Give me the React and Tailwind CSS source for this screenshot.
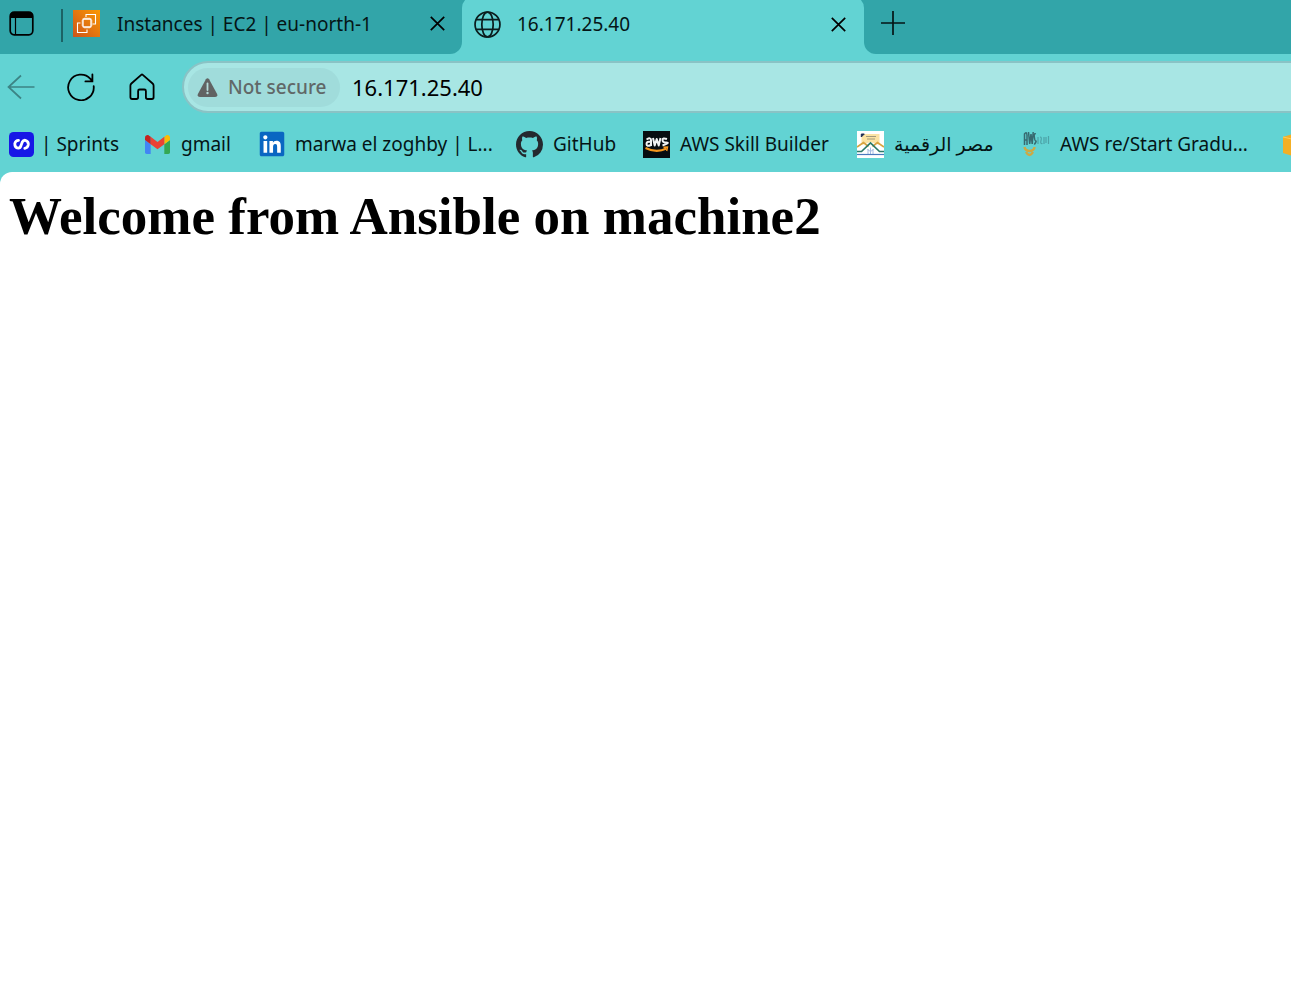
import React from "react";
import { FaLinkedin } from "react-icons/fa";

function TabActionsIcon() {
  return (
    <svg width="25" height="25" viewBox="0 0 25 25" fill="none">
      <rect x="1.2" y="1.2" width="22.6" height="22.6" rx="4" stroke="#000" strokeWidth="1.7" />
      <path d="M1 7V5a4 4 0 0 1 4-4h15a4 4 0 0 1 4 4v2z" fill="#000" />
      <path d="M6.5 7v16.500" stroke="#000" strokeWidth="1.2" />
    </svg>
  );
}

function Ec2Icon() {
  return (
    <svg className="shrink-0" width="27" height="27" viewBox="0 0 27 27" fill="none">
      <defs>
        <linearGradient id="ec2" x1="0" y1="1" x2="1" y2="0">
          <stop offset="0" stopColor="#cc551a" />
          <stop offset="1" stopColor="#fb9803" />
        </linearGradient>
      </defs>
      <rect width="27" height="27" fill="url(#ec2)" />
      <g stroke="#fff" strokeWidth="1.1">
        <path d="M13 7V4.500h9.500v9.500H19.500M7.500 13H4.500v9.500h9.500V19.500" />
        <rect x="10" y="9" width="8" height="8" rx="0.5" strokeWidth="1.3" />
        <path strokeWidth="0.8" d="M12 7.500v1.500M14 7.500v1.500M16 7.500v1.500M12 17v1.500M14 17v1.500M16 17v1.500M8.500 11h1.500M8.500 13h1.500M8.500 15h1.500M18 11h1.500M18 13h1.500M18 15h1.500" />
      </g>
    </svg>
  );
}

function CloseIcon() {
  return (
    <svg width="15" height="15" viewBox="0 0 15 15" stroke="#000" strokeWidth="1.7">
      <path d="M.8.8l13.400 13.400M14.200.8L.8 14.200" />
    </svg>
  );
}

function GlobeIcon() {
  return (
    <svg className="shrink-0" width="27" height="27" viewBox="0 0 28 28" fill="none" stroke="#0b1d1e" strokeWidth="1.8">
      <circle cx="14" cy="14" r="12.900" />
      <ellipse cx="14" cy="14" rx="5.900" ry="12.900" />
      <path d="M2.300 9h23.400M2.300 19h23.400" />
    </svg>
  );
}

function PlusIcon() {
  return (
    <svg width="24" height="24" viewBox="0 0 24 24" stroke="#051516" strokeWidth="1.7">
      <path d="M12 0v24M0 12h24" />
    </svg>
  );
}

function BackIcon() {
  return (
    <svg width="28" height="26" viewBox="0 0 28 26" fill="none" stroke="#3c8485" strokeWidth="1.7">
      <path d="M14 1.500L1.500 13 14 24.500M1.500 13H27.500" />
    </svg>
  );
}

function ReloadIcon() {
  return (
    <svg width="28" height="28" viewBox="0 0 28 28" fill="none" stroke="#000" strokeWidth="1.8" strokeLinecap="round">
      <path d="M26.700 13.200A12.800 12.800 0 1 1 23.400 5.800L25.200 8.300M25.400 1.400v7h-7" />
    </svg>
  );
}

function HomeIcon() {
  return (
    <svg width="26" height="28" viewBox="0 0 26 28" fill="none" stroke="#000" strokeWidth="1.8" strokeLinejoin="round">
      <path d="M12.200 1.900q.8-.7 1.600 0L23.600 10.500q1 .9 1 2.200V24.300q0 1.700-1.700 1.700h-4.300q-1.700 0-1.700-1.700V18q0-1.500-1.500-1.500h-4.800q-1.500 0-1.500 1.500v6.300q0 1.700-1.700 1.700H3.100q-1.700 0-1.700-1.700V12.700q0-1.300 1-2.200z" />
    </svg>
  );
}

function WarningIcon() {
  return (
    <svg className="shrink-0" width="21" height="19" viewBox="0 0 21 19">
      <path d="M8.900 1.200q1.600-1.900 3.200 0l8 14.800q.9 2.700-1.900 3H2.800Q0 18.700.9 16z" fill="#616363" />
      <path d="M10.500 5.500v6.500" stroke="#b5dcda" strokeWidth="1.8" strokeLinecap="round" />
      <circle cx="10.500" cy="15" r="1.200" fill="#b5dcda" />
    </svg>
  );
}

function SprintsIcon() {
  return (
    <svg width="25" height="25" viewBox="0 0 25 25" fill="none">
      <rect width="25" height="25" rx="4.500" fill="#1717e6" />
      <g stroke="#fff" strokeWidth="2.8" strokeLinecap="round" strokeLinejoin="round">
        <path d="M9.500 8.300Q6.500 8.500 5.800 11.500Q5.600 15.500 9.300 16.200Q11.300 16 12 13.500L13.300 10Q14.300 8 16.300 8.300Q19.800 9.500 19.300 12.800Q18.700 15.800 15.800 16.400" />
      </g>
    </svg>
  );
}

function GmailIcon() {
  return (
    <svg width="25" height="19" viewBox="52 42 88 66">
      <path fill="#4285f4" d="M58 108h14V74L52 59v43c0 3.320 2.690 6 6 6" />
      <path fill="#34a853" d="M120 108h14c3.320 0 6-2.690 6-6V59l-20 15" />
      <path fill="#fbbc04" d="M120 48v26l20-15v-8c0-7.420-8.470-11.650-14.400-7.200" />
      <path fill="#ea4335" d="M72 74V48l24 18 24-18v26L96 92" />
      <path fill="#c5221f" d="M52 51v8l20 15V48l-5.600-4.200c-5.940-4.450-14.400-.22-14.400 7.200" />
    </svg>
  );
}

function LinkedInIcon() {
  return (
    <span className="flex size-[25px] items-center justify-center bg-[linear-gradient(#fff,#fff)] bg-[length:19px_19px] bg-center bg-no-repeat">
      <FaLinkedin size={28} color="#0a66c2" className="shrink-0" />
    </span>
  );
}

function GitHubIcon() {
  return (
    <svg width="27" height="27" viewBox="0 0 16 16" fill="#24292f">
      <path d="M8 0C3.580 0 0 3.580 0 8c0 3.540 2.290 6.530 5.470 7.590.4.070.55-.17.55-.38 0-.19-.01-.82-.01-1.490-2.010.37-2.530-.49-2.690-.94-.09-.23-.48-.94-.82-1.130-.28-.15-.68-.52-.01-.53.63-.01 1.080.58 1.230.82.72 1.210 1.870.87 2.330.66.07-.52.28-.87.51-1.070-1.780-.2-3.640-.89-3.640-3.950 0-.87.31-1.590.82-2.150-.08-.2-.36-1.020.08-2.120 0 0 .67-.21 2.200.82.64-.18 1.320-.27 2-.27s1.360.09 2 .27c1.530-1.040 2.200-.82 2.200-.82.44 1.100.16 1.920.08 2.120.51.56.82 1.270.82 2.150 0 3.070-1.870 3.750-3.650 3.950.29.25.54.73.54 1.480 0 1.070-.01 1.930-.01 2.200 0 .21.15.46.55.38A8.010 8.010 0 0 0 16 8c0-4.420-3.580-8-8-8z" />
    </svg>
  );
}

function AwsIcon() {
  return (
    <svg width="27" height="27" viewBox="0 0 27 27" fill="none">
      <rect width="27" height="27" fill="#070d10" />
      <g stroke="#f1f3f3" strokeWidth="2" strokeLinejoin="round">
        <path d="M3.500 8.500Q8 6 8 9v6M8 11Q3.500 10 3.500 13t4.500 1" />
        <path d="M10 7l1.700 7.500L13.700 8l2 6.500L17.500 7" />
        <path d="M24 8q-4.500-1.500-4.500 1t4 2.500-4 3" />
      </g>
      <path d="M2.500 17q11 5.500 21 .5" stroke="#f7981d" strokeWidth="2" />
      <path d="M20.500 16.200l4-.2-.8 4" stroke="#f7981d" strokeWidth="1.4" />
    </svg>
  );
}

function DigitalEgyptIcon() {
  return (
    <svg width="27" height="27" viewBox="0 0 27 27" fill="none">
      <rect width="27" height="27" fill="#fff" />
      <path d="M4.500 3h18v11l-9-3-9 3z" fill="#fbe3a3" />
      <path d="M4.300 6V3h3z" fill="#1d2b55" stroke="#1d2b55" />
      <path d="M9 5.500h10M10 8h8" stroke="#a39a7b" />
      <path d="M0 16l6.500-4.500 5 4M15.500 15.500l5-4L27 16" stroke="#d9a440" strokeWidth="1.7" />
      <path d="M0 20.500h4.500l9-8.500 9 8.500H27" stroke="#2c7a68" strokeWidth="1.7" />
      <path d="M11 23v-5M13.500 23v-6.500M16 23v-5M10.500 18.500l3 2 3-2" stroke="#a6bce2" />
      <path d="M0 23.500h27" stroke="#4a79bd" strokeWidth="1.2" />
    </svg>
  );
}

function RestartIcon() {
  return (
    <svg width="27" height="27" viewBox="0 0 27 27" fill="none">
      <path d="M1.500 14V3q2-3 2.500 1v10M1.500 9h3M5.500 1l1.200 12L8 3l1.200 10L10.200 1M12.800 3q-2-1-1.500 3t1.500 4-1.500 3.500" stroke="#376a70" strokeWidth="1.5" />
      <path d="M15 6v7M17 6q2 0 1 3.500t1.500 3M21 6v7M23 6v6M25.500 5v8" stroke="#4ca3a8" strokeWidth="1.2" />
      <path d="M1.500 16q.5 3.500 5 4 5-.5 5-4M3 21q3.500 6 7 0" stroke="#cda944" strokeWidth="2.4" />
    </svg>
  );
}

function CubeIcon() {
  return (
    <svg width="27" height="27" viewBox="0 0 27 27">
      <path d="M0 6l13-4 14 4v15l-14 5-13-4z" fill="#f3af25" />
      <path d="M0 6l13 3L27 6" fill="none" stroke="#ffcb57" />
    </svg>
  );
}

const bookmarks = [
  { label: "| Sprints", Icon: SprintsIcon, width: "w-[136px]", gap: "gap-[6px]" },
  { label: "gmail", Icon: GmailIcon, width: "w-[114px]", gap: "gap-[10px]" },
  { label: "marwa el zoghby | L...", Icon: LinkedInIcon, width: "w-[258px]", gap: "gap-[10px]" },
  { label: "GitHub", Icon: GitHubIcon, width: "w-[127px]", gap: "gap-[10px]" },
  { label: "AWS Skill Builder", Icon: AwsIcon, width: "w-[214px]", gap: "gap-[10px]" },
  { label: "مصر الرقمية", Icon: DigitalEgyptIcon, width: "w-[166px]", gap: "gap-[10px]" },
  { label: "AWS re/Start Gradu...", Icon: RestartIcon, width: "w-[260px]", gap: "gap-[10px]" },
];

export default function App() {
  return (
    <div className="flex min-h-screen flex-col overflow-hidden bg-[#62d3d3] font-['Noto_Sans','DejaVu_Sans',sans-serif] text-[19px] leading-6 text-[#051516]">
      <header>
        <div className="flex h-[54px] overflow-hidden bg-[#62d3d3]">
          <div className="flex w-[462px] shrink-0 items-center rounded-br-xl bg-[#32a5a9] pr-[17px] pb-[7px] pl-[9px]">
            <button aria-label="Tab actions menu"><TabActionsIcon /></button>
            <div className="mt-1 ml-[27px] h-[33px] w-[2px] shrink-0 bg-[#1c6265]" />
            <div className="ml-[10px] flex flex-1 items-center">
              <Ec2Icon />
              <button className="ml-[17px] whitespace-nowrap">Instances | EC2 | eu-north-1</button>
              <button className="ml-auto" aria-label="Close Instances tab"><CloseIcon /></button>
            </div>
          </div>
          <div className="w-[402px] shrink-0 bg-[linear-gradient(#32a5a9_0_20px,#62d3d3_20px)]">
            <div className="-mt-1 flex h-[58px] items-center rounded-t-xl bg-[#62d3d3] pr-[18px] pb-[2px] pl-3">
              <GlobeIcon />
              <button className="ml-4">16.171.25.40</button>
              <button className="ml-auto" aria-label="Close current tab"><CloseIcon /></button>
            </div>
          </div>
          <div className="flex flex-1 items-center rounded-bl-xl bg-[#32a5a9] pb-2 pl-[17px]">
            <button aria-label="New tab"><PlusIcon /></button>
          </div>
        </div>

        <div className="flex h-[67px] items-center pb-px pl-[7px]">
          <button aria-label="Back"><BackIcon /></button>
          <button className="ml-8" aria-label="Refresh"><ReloadIcon /></button>
          <button className="ml-[34px]" aria-label="Home"><HomeIcon /></button>
          <div className="-mr-8 ml-[27px] flex h-[52px] flex-1 items-center rounded-full border-2 border-[#8ac3c5] bg-[#a8e6e4] pl-1">
            <button className="flex h-[39px] w-[152px] shrink-0 items-center gap-[10px] rounded-full bg-[#a0dcdb] pl-[9px] font-medium whitespace-nowrap text-[#616868]">
              <WarningIcon />
              Not secure
            </button>
            <input
              aria-label="Address"
              defaultValue="16.171.25.40"
              className="ml-3 min-w-0 flex-1 bg-transparent text-[22px] text-black outline-none"
            />
          </div>
        </div>

        <nav aria-label="Favorites" className="flex h-[51px] items-center overflow-hidden pb-[5px] pl-2">
          {bookmarks.map(({ label, Icon, width, gap }) => (
            <a key={label} href="#" className={`flex shrink-0 items-center whitespace-nowrap ${gap} ${width}`}>
              <span className="flex w-[27px] shrink-0 justify-center"><Icon /></span>
              {label}
            </a>
          ))}
          <a href="#" aria-label="More favorites" className="shrink-0"><CubeIcon /></a>
        </nav>
      </header>

      <main className="flex-1 rounded-tl-xl bg-white px-[9px] pt-[14px]">
        <h1 className="font-['Liberation_Serif',serif] text-[53px] leading-[60px] font-bold text-black">
          Welcome from Ansible on machine2
        </h1>
      </main>
    </div>
  );
}
